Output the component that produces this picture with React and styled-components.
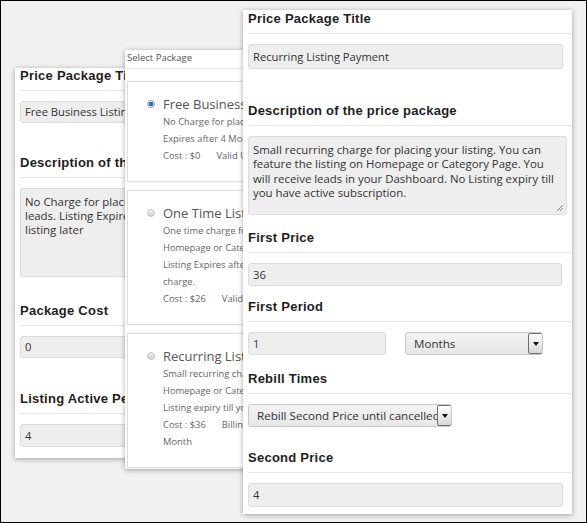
import React from "react";
import styled, { createGlobalStyle } from "styled-components";

const GlobalStyle = createGlobalStyle`
  body {
    margin: 0;
    font-family: "Open Sans", "Liberation Sans", sans-serif;
  }
`;

// Canvas holding the three overlapping form screenshots
const Stage = styled.div`
  position: relative;
  width: 587px;
  height: 523px;
  box-sizing: border-box;
  border: 1px solid #000;
  background: #f1f1f1;
  overflow: hidden;
`;

const Window = styled.div`
  position: absolute;
  left: ${(p) => p.$x - 1}px;
  top: ${(p) => p.$y - 1}px;
  width: ${(p) => p.$w}px;
  box-sizing: border-box;
  padding: ${(p) => p.$pad};
  background: #fff;
  box-shadow: 0 1px 5px rgba(0, 0, 0, 0.35);
  overflow: hidden;
`;

const Heading = styled.div`
  margin-top: ${(p) => p.$mt || 0}px;
  height: 16px;
  line-height: 16px;
  font-family: "Liberation Sans", Arial, sans-serif;
  font-weight: bold;
  font-size: 13px;
  letter-spacing: 0.25px;
  color: #1e1e1e;
  white-space: nowrap;
`;

const Rule = styled.div`
  height: 1px;
  margin: 6px 0 10px;
  background: #e8e8e8;
`;

const Field = styled.div`
  width: ${(p) => p.$w}px;
  height: ${(p) => p.$h || 23}px;
  box-sizing: border-box;
  padding: 0 4px;
  border: 1px solid #dcdcdc;
  border-radius: 3px;
  background: #eeeeee;
  font-size: 11.2px;
  line-height: ${(p) => (p.$h || 23) - 2}px;
  color: #333;
  white-space: nowrap;
  overflow: hidden;
`;

const TextBox = styled.div`
  position: relative;
  width: ${(p) => p.$w}px;
  height: ${(p) => p.$h}px;
  box-sizing: border-box;
  padding: 6px 4px;
  border: 1px solid #dcdcdc;
  border-radius: 3px;
  background: #eeeeee;
  font-size: 11.4px;
  line-height: ${(p) => p.$lh}px;
  color: #333;
  white-space: pre;
  overflow: hidden;
`;

const Grip = styled.svg`
  position: absolute;
  right: 2px;
  bottom: 2px;
`;

const Row = styled.div`
  display: flex;
  align-items: center;
  gap: 19px;
`;

const Select = styled.div`
  display: flex;
  align-items: center;
  width: ${(p) => p.$w}px;
  height: 23px;
  box-sizing: border-box;
  padding-left: ${(p) => p.$pl}px;
  border: 1px solid #c8c8c8;
  border-radius: 3px;
  background: linear-gradient(#f3f3f3, #e7e7e7);
  font-size: 11.6px;
  color: #333;
  overflow: hidden;
`;

const SelectText = styled.span`
  flex: 1;
  white-space: nowrap;
  overflow: hidden;
`;

const ArrowBox = styled.span`
  display: flex;
  align-items: center;
  justify-content: center;
  flex: none;
  width: 15px;
  height: 21px;
  box-sizing: border-box;
  margin-right: -1px;
  border: 1px solid #6f6f6f;
  border-radius: 2px;
  background: linear-gradient(#ffffff, #d6d6d6);
  &::after {
    content: "";
    border-left: 3.5px solid transparent;
    border-right: 3.5px solid transparent;
    border-top: 4px solid #111;
  }
`;

const PanelTitle = styled.div`
  height: 14px;
  margin-top: 1px;
  font-size: 9.5px;
  line-height: 14px;
  color: #555;
  white-space: nowrap;
`;

const ThinRule = styled.div`
  height: 1px;
  margin: 3px 0 12px;
  background: #e8e8e8;
`;

const Card = styled.div`
  margin-top: ${(p) => (p.$first ? 0 : 8)}px;
  padding: 13px 0 17px 19px;
  border: 1px solid #dedede;
  box-shadow: 0 0 2px rgba(0, 0, 0, 0.08);
`;

const CardHead = styled.div`
  display: flex;
  align-items: center;
  gap: 8px;
  height: 18px;
`;

const Radio = styled.span`
  flex: none;
  width: 8px;
  height: 8px;
  box-sizing: border-box;
  border-radius: 50%;
  border: 1px solid ${(p) => (p.$on ? "#9aa3ad" : "#c6c6c6")};
  background: ${(p) =>
    p.$on
      ? "radial-gradient(circle, #2e6fc0 0 2px, #dfe3e8 2.5px)"
      : "linear-gradient(#f2f2f2, #cfcfcf)"};
`;

const CardTitle = styled.span`
  font-size: 13px;
  line-height: 18px;
  color: #555;
  white-space: nowrap;
`;

const Lines = styled.div`
  margin-left: 16px;
  font-size: 9.4px;
  line-height: 17px;
  color: #666;
  white-space: nowrap;
`;

const Meta = styled.span`
  margin-left: 16px;
`;

const packages = [
  {
    title: "Free Business Listing",
    on: true,
    lines: [
      "No Charge for placing your listing. You will receive leads.",
      "Expires after 4 Months, you can renew the listing later",
    ],
    cost: "$0",
    meta: ["Valid Upto: 4 Months"],
  },
  {
    title: "One Time Listing Payment",
    lines: [
      "One time charge for placing your listing. You can feature on",
      "Homepage or Category Page. You will receive leads.",
      "Listing Expires after 6 Months, you can renew with one time",
      "charge.",
    ],
    cost: "$26",
    meta: ["Valid Upto: 6 Months"],
  },
  {
    title: "Recurring Listing Payment",
    lines: [
      "Small recurring charge for placing your listing. You can feature",
      "Homepage or Category Page. You will receive leads. No",
      "Listing expiry till you have active subscription.",
    ],
    cost: "$36",
    meta: ["Billing Period: 1", "Month"],
  },
];

function ResizeGrip() {
  return (
    <Grip width="8" height="8" viewBox="0 0 8 8">
      <path d="M7 1 L1 7 M7 4 L4 7" stroke="#8a8a8a" strokeWidth="1" />
    </Grip>
  );
}

export default function App() {
  return (
    <>
      <GlobalStyle />
      <Stage>
        <Window $x={15} $y={68} $w={230} $pad="0 0 11px 5px">
          <Heading>Price Package Title</Heading>
          <Rule />
          <Field $w={300} $h={22}>Free Business Listing</Field>
          <Heading $mt={32}>Description of the price package</Heading>
          <Rule />
          <TextBox $w={300} $h={89} $lh={14}>
            {"No Charge for placing your listing. You will receive\nleads. Listing Expires after 4 Months, you can renew the\nlisting later"}
          </TextBox>
          <Heading $mt={26}>Package Cost</Heading>
          <Rule />
          <Field $w={300} $h={22}>0</Field>
          <Heading $mt={33}>Listing Active Period</Heading>
          <Rule />
          <Field $w={300}>4</Field>
        </Window>

        <Window $x={125} $y={50} $w={230} $pad="0 0 1px 2px">
          <PanelTitle>Select Package</PanelTitle>
          <ThinRule />
          {packages.map((p, i) => (
            <Card key={p.title} $first={i === 0}>
              <CardHead>
                <Radio $on={p.on} />
                <CardTitle>{p.title}</CardTitle>
              </CardHead>
              <Lines>
                {p.lines.map((l) => (
                  <div key={l}>{l}</div>
                ))}
                <div>
                  Cost : {p.cost}
                  <Meta>{p.meta[0]}</Meta>
                </div>
                {p.meta[1] && <div>{p.meta[1]}</div>}
              </Lines>
            </Card>
          ))}
        </Window>

        <Window $x={243} $y={10} $w={329} $pad="1px 0 7px 5px">
          <Heading>Price Package Title</Heading>
          <Rule />
          <Field $w={315} $h={25}>Recurring Listing Payment</Field>
          <Heading $mt={34}>Description of the price package</Heading>
          <Rule />
          <TextBox $w={319} $h={79} $lh={14.4}>
            {"Small recurring charge for placing your listing. You can\nfeature the listing on Homepage or Category Page. You\nwill receive leads in your Dashboard. No Listing expiry till\nyou have active subscription."}
            <ResizeGrip />
          </TextBox>
          <Heading $mt={15}>First Price</Heading>
          <Rule />
          <Field $w={314}>36</Field>
          <Heading $mt={13}>First Period</Heading>
          <Rule />
          <Row>
            <Field $w={138}>1</Field>
            <Select $w={138} $pl={8}>
              <SelectText>Months</SelectText>
              <ArrowBox />
            </Select>
          </Row>
          <Heading $mt={16}>Rebill Times</Heading>
          <Rule />
          <Select $w={204} $pl={8}>
            <SelectText>Rebill Second Price until cancelled</SelectText>
            <ArrowBox />
          </Select>
          <Heading $mt={23}>Second Price</Heading>
          <Rule />
          <Field $w={315} $h={24}>4</Field>
        </Window>
      </Stage>
    </>
  );
}
